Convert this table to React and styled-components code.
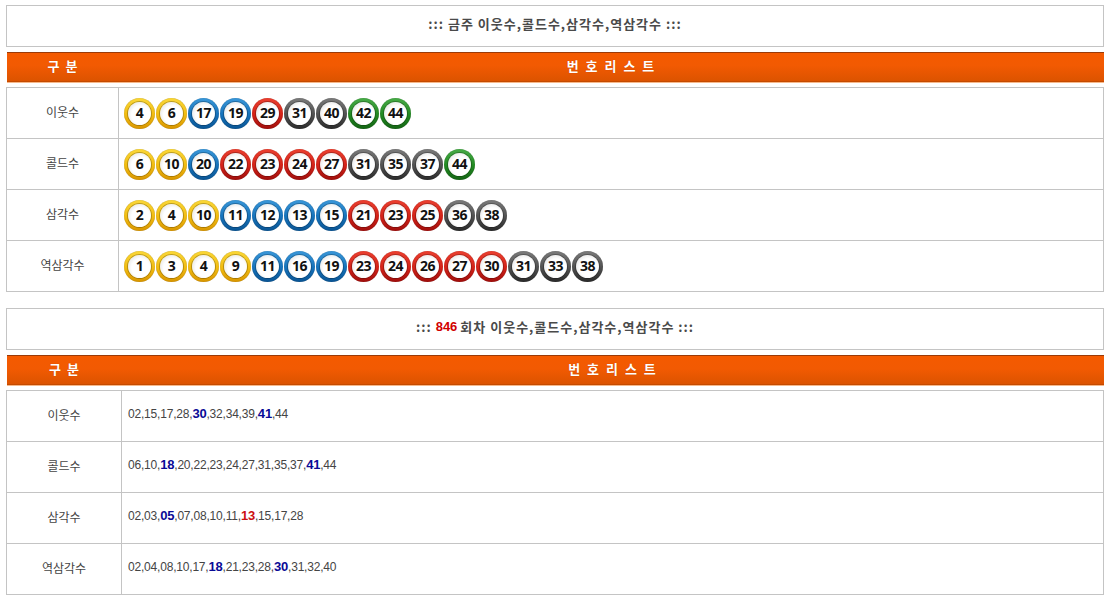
import React from 'react';
import styled, { createGlobalStyle } from 'styled-components';

const Global = createGlobalStyle`
  html, body { margin: 0; padding: 0; background: #fff; }
  body { font-family: "Noto Sans CJK KR", "Liberation Sans", sans-serif; }
`;

const Page = styled.div`
  width: 1098px;
  padding: 5px 0 0 6px;
  display: flex;
  flex-direction: column;
`;

const Section = styled.section`
  display: flex;
  flex-direction: column;
  & + & { margin-top: 16px; }
`;

const TitleBox = styled.div`
  height: 42px;
  box-sizing: border-box;
  border: 1px solid #c4c4c4;
  padding-bottom: 5px;
  display: flex;
  align-items: center;
  justify-content: center;
  font-family: "Noto Sans CJK KR", sans-serif;
  font-size: 13px;
  font-weight: bold;
  color: #4a4a4a;
  letter-spacing: 1px;
`;

const Round = styled.span`
  color: #d10000;
  margin: 0 3px 0 4px;
  font-family: "Liberation Sans", sans-serif;
  letter-spacing: 0;
`;

const HeaderBar = styled.div`
  margin: 5px 0 5px 1px;
  height: 28px;
  display: grid;
  grid-template-columns: ${p => p.$col - 1}px 1fr;
  align-items: center;
  border-top: 1px solid #9a3a08;
  border-bottom: 1px solid #c44a00;
  box-shadow: 0 1px 0 #f7b88a;
  background: linear-gradient(to bottom, #f45a00 0%, #f25a02 45%, #dc5300 100%);
  color: #fff;
  font-family: "Noto Sans CJK KR", sans-serif;
  font-weight: bold;
  font-size: 13px;
  text-shadow: 0 0 1px rgba(120, 40, 0, 0.4);
`;

const HeadCell = styled.div`
  text-align: center;
  letter-spacing: ${p => p.$spacing || 0}px;
  word-spacing: ${p => p.$words || 0}px;
  padding-bottom: 4px;
`;

const Grid = styled.div`
  display: grid;
  grid-template-columns: ${p => p.$col}px 1fr;
  border-top: 1px solid #c4c4c4;
  border-left: 1px solid #c4c4c4;
`;

const Label = styled.div`
  height: 51px;
  box-sizing: border-box;
  padding-bottom: 4px;
  border-right: 1px solid #c4c4c4;
  border-bottom: 1px solid #c4c4c4;
  display: flex;
  align-items: center;
  justify-content: center;
  font-family: "Noto Sans CJK KR", sans-serif;
  font-size: 12px;
  color: #444;
`;

const Value = styled.div`
  height: 51px;
  box-sizing: border-box;
  padding-bottom: ${p => p.$lift || 0}px;
  border-right: 1px solid #c4c4c4;
  border-bottom: 1px solid #c4c4c4;
  display: flex;
  align-items: center;
  padding-left: ${p => p.$pad}px;
  gap: 1px;
  font-family: "Liberation Sans", sans-serif;
  font-size: 12px;
  color: #444;
  letter-spacing: -0.2px;
`;

const Mark = styled.b`
  color: ${p => (p.$red ? '#cc1010' : '#0a0a96')};
  font-size: 13px;
`;

const COLORS = {
  y: ['#fbd838', '#f2bc10', '#d99600'],
  b: ['#3a98da', '#1572bb', '#0a5594'],
  r: ['#ec4030', '#d42218', '#a00e0c'],
  g: ['#7c7c7c', '#505050', '#2a2a2a'],
  n: ['#48ac48', '#228a22', '#146414'],
};

const colorOf = n => (n <= 10 ? 'y' : n <= 20 ? 'b' : n <= 30 ? 'r' : n <= 40 ? 'g' : 'n');

const Ball = styled.span`
  width: 31px;
  height: 31px;
  border-radius: 50%;
  flex: none;
  display: flex;
  align-items: center;
  justify-content: center;
  background: ${p => {
    const c = COLORS[p.$c];
    return `linear-gradient(to bottom, ${c[0]} 0%, ${c[1]} 55%, ${c[2]} 100%)`;
  }};
  box-shadow: inset 0 0 1px rgba(0, 0, 0, 0.35);
`;

const Face = styled.span`
  width: 23px;
  height: 23px;
  border-radius: 50%;
  display: flex;
  align-items: center;
  justify-content: center;
  background: radial-gradient(circle at 55% 55%, #ffffff 50%, #ececec 72%, #b8b8b8 100%);
  box-shadow: 0 0 0 1px rgba(0, 0, 0, 0.25);
  font-family: "Open Sans", "Liberation Sans", sans-serif;
  font-weight: 700;
  font-size: 14px;
  letter-spacing: -0.6px;
  color: #111;
  line-height: 1;
`;

const weekly = [
  ['이웃수', [4, 6, 17, 19, 29, 31, 40, 42, 44]],
  ['콜드수', [6, 10, 20, 22, 23, 24, 27, 31, 35, 37, 44]],
  ['삼각수', [2, 4, 10, 11, 12, 13, 15, 21, 23, 25, 36, 38]],
  ['역삼각수', [1, 3, 4, 9, 11, 16, 19, 23, 24, 26, 27, 30, 31, 33, 38]],
];

const round = [
  ['이웃수', ['02', '15', '17', '28', ['30', 'b'], '32', '34', '39', ['41', 'b'], '44']],
  ['콜드수', ['06', '10', ['18', 'b'], '20', '22', '23', '24', '27', '31', '35', '37', ['41', 'b'], '44']],
  ['삼각수', ['02', '03', ['05', 'b'], '07', '08', '10', '11', ['13', 'r'], '15', '17', '28']],
  ['역삼각수', ['02', '04', '08', '10', '17', ['18', 'b'], '21', '23', '28', ['30', 'b'], '31', '32', '40']],
];

function Header({ col }) {
  return (
    <HeaderBar $col={col}>
      <HeadCell $words={3}>구 분</HeadCell>
      <HeadCell $spacing={1} $words={2}>번 호 리 스 트</HeadCell>
    </HeaderBar>
  );
}

function NumberList({ items }) {
  return (
    <span>
      {items.map((it, i) => {
        const sep = i < items.length - 1 ? ',' : '';
        if (Array.isArray(it)) {
          return (
            <React.Fragment key={i}>
              <Mark $red={it[1] === 'r'}>{it[0]}</Mark>
              {sep}
            </React.Fragment>
          );
        }
        return <React.Fragment key={i}>{it + sep}</React.Fragment>;
      })}
    </span>
  );
}

export default function App() {
  return (
    <>
      <Global />
      <Page>
        <Section>
          <TitleBox>::: 금주 이웃수,콜드수,삼각수,역삼각수 :::</TitleBox>
          <Header col={112} />
          <Grid $col={112}>
            {weekly.map(([label, nums]) => (
              <React.Fragment key={label}>
                <Label>{label}</Label>
                <Value $pad={5}>
                  {nums.map((n, i) => (
                    <Ball key={i} $c={colorOf(n)}>
                      <Face>{n}</Face>
                    </Ball>
                  ))}
                </Value>
              </React.Fragment>
            ))}
          </Grid>
        </Section>
        <Section>
          <TitleBox>
            :::<Round>846</Round>회차 이웃수,콜드수,삼각수,역삼각수 :::
          </TitleBox>
          <Header col={115} />
          <Grid $col={115}>
            {round.map(([label, items]) => (
              <React.Fragment key={label}>
                <Label>{label}</Label>
                <Value $pad={6} $lift={5}>
                  <NumberList items={items} />
                </Value>
              </React.Fragment>
            ))}
          </Grid>
        </Section>
      </Page>
    </>
  );
}
